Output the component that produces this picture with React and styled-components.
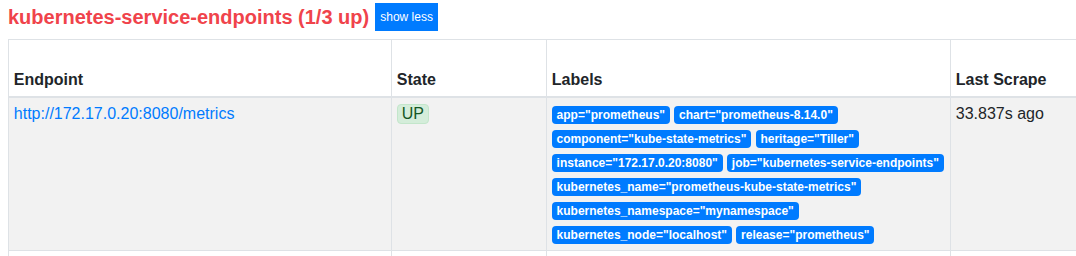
import React from "react";
import styled, { createGlobalStyle } from "styled-components";

const GlobalStyle = createGlobalStyle`
  html, body { margin: 0; padding: 0; overflow: hidden; background: #fff; }
  body {
    font-family: "Liberation Sans", Arial, Helvetica, sans-serif;
    font-size: 16px;
    line-height: 1.5;
    color: #212529;
  }
`;

const Page = styled.div`
  padding: 3px 0 0 8px;
  overflow: hidden;
`;

const PoolHeader = styled.div`
  display: flex;
  align-items: center;
  gap: 6px;
  height: 28px;
  margin-bottom: 8px;
`;

const PoolTitle = styled.h2`
  margin: 0;
  font-size: 20px;
  line-height: 28px;
  font-weight: 700;
  color: #f0434b;
  white-space: nowrap;
`;

const ToggleButton = styled.button`
  height: 28px;
  padding: 0 5px;
  border: none;
  border-radius: 0;
  background: #007bff;
  color: #fff;
  font-family: "Liberation Sans", Arial, sans-serif;
  font-size: 12px;
  line-height: 28px;
  cursor: pointer;
`;

const Table = styled.table`
  border-collapse: collapse;
  table-layout: fixed;
  width: 1450px;
  color: #212529;
`;

const HeadCell = styled.th`
  padding: 4px 4.8px;
  text-align: left;
  vertical-align: bottom;
  font-weight: 700;
  border: 1px solid #dee2e6;
  border-bottom: 2px solid #dee2e6;
`;

const Row = styled.tr`
  background: ${(p) => (p.$striped ? "#f2f2f2" : "#fff")};
`;

const Cell = styled.td`
  padding: 4px 4.8px;
  vertical-align: top;
  border: 1px solid #dee2e6;
`;

const EndpointLink = styled.a`
  color: #007bff;
  text-decoration: none;
`;

const StateBadge = styled.span`
  display: inline-block;
  padding: 0 4px;
  line-height: 18px;
  font-size: 16px;
  border-radius: 4px;
  border: 1px solid ${(p) => (p.$up ? "#c3e6cb" : "#f5c6cb")};
  background: ${(p) => (p.$up ? "#d4edda" : "#f8d7da")};
  color: ${(p) => (p.$up ? "#155724" : "#721c24")};
`;

const LabelBadge = styled.span`
  display: inline-block;
  padding: 3px 4.8px;
  font-size: 12px;
  font-weight: 700;
  line-height: 1;
  white-space: nowrap;
  vertical-align: baseline;
  border-radius: 4px;
  background: #007bff;
  color: #fff;
`;

const columns = [
  { title: "Endpoint", width: 383 },
  { title: "State", width: 155 },
  { title: "Labels", width: 404 },
  { title: "Last Scrape", width: 128 },
  { title: "Scrape Duration", width: 90 },
  { title: "Error", width: 290 },
];

const baseLabels = (instance, namespace) => [
  ["app", "prometheus"],
  ["chart", "prometheus-8.14.0"],
  ["component", "kube-state-metrics"],
  ["heritage", "Tiller"],
  ["instance", instance],
  ["job", "kubernetes-service-endpoints"],
  ["kubernetes_name", "prometheus-kube-state-metrics"],
  ["kubernetes_namespace", namespace],
  ["kubernetes_node", "localhost"],
  ["release", "prometheus"],
];

const targets = [
  {
    url: "http://172.17.0.20:8080/metrics",
    up: true,
    labels: baseLabels("172.17.0.20:8080", "mynamespace"),
    lastScrape: "33.837s ago",
    duration: "9.913ms",
    error: "",
  },
  {
    url: "http://172.17.0.21:9100/metrics",
    up: false,
    labels: baseLabels("172.17.0.21:9100", "mynamespace"),
    lastScrape: "12.405s ago",
    duration: "10.002s",
    error: "context deadline exceeded",
  },
  {
    url: "http://172.17.0.22:9100/metrics",
    up: false,
    labels: baseLabels("172.17.0.22:9100", "mynamespace"),
    lastScrape: "8.117s ago",
    duration: "10.001s",
    error: "context deadline exceeded",
  },
];

export default function App() {
  return (
    <>
      <GlobalStyle />
      <Page>
        <PoolHeader>
          <PoolTitle>kubernetes-service-endpoints (1/3 up)</PoolTitle>
          <ToggleButton>show less</ToggleButton>
        </PoolHeader>
        <Table>
          <colgroup>
            {columns.map((c) => (
              <col key={c.title} style={{ width: c.width }} />
            ))}
          </colgroup>
          <thead>
            <tr>
              {columns.map((c) => (
                <HeadCell key={c.title}>{c.title}</HeadCell>
              ))}
            </tr>
          </thead>
          <tbody>
            {targets.map((t, i) => (
              <Row key={t.url} $striped={i % 2 === 0}>
                <Cell>
                  <EndpointLink href="#">{t.url}</EndpointLink>
                </Cell>
                <Cell>
                  <StateBadge $up={t.up}>{t.up ? "UP" : "DOWN"}</StateBadge>
                </Cell>
                <Cell>
                  {t.labels.map(([k, v]) => (
                    <React.Fragment key={k}>
                      <LabelBadge>{`${k}="${v}"`}</LabelBadge>{" "}
                    </React.Fragment>
                  ))}
                </Cell>
                <Cell>{t.lastScrape}</Cell>
                <Cell>{t.duration}</Cell>
                <Cell>{t.error}</Cell>
              </Row>
            ))}
          </tbody>
        </Table>
      </Page>
    </>
  );
}
